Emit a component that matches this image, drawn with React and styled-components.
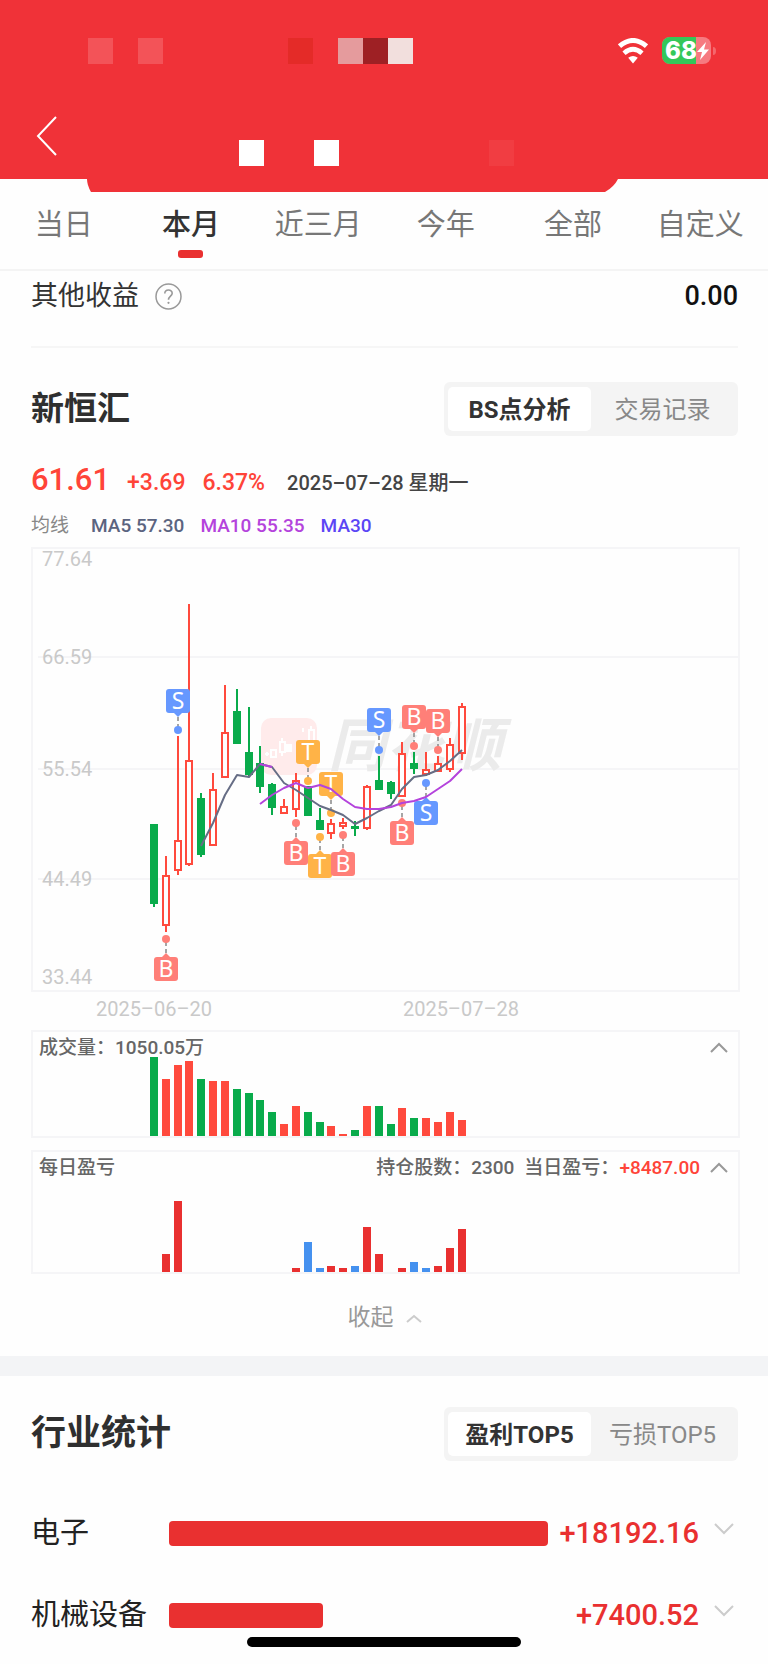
import React, { useState } from "react"
import styled, { createGlobalStyle } from "styled-components"

const GlobalStyle = createGlobalStyle`
  * {
    box-sizing: border-box;
  }

  body {
    margin: 0;
    background: #fefefe;
    color: #333;
    font-family: Roboto, "Noto Sans CJK SC", sans-serif;
  }

  button {
    font-family: inherit;
    border: none;
    padding: 0;
    background: none;
    cursor: pointer;
  }

  svg {
    display: block;
  }
`

const HeaderStyled = styled.header`
  position: relative;
  padding: 37px 0 13px;
  background: #f03238;
`
const StatusBarStyled = styled.div`
  display: flex;
  align-items: center;
  justify-content: space-between;
  height: 28px;
  padding: 0 51px 0 88px;
`
const StatusIconsStyled = styled.div`
  display: flex;
  align-items: center;
  gap: 14px;
`
const TilesStyled = styled.div`
  display: flex;
`
const TileStyled = styled.span`
  width: 25px;
  height: 26px;
  background: ${({ $color }) => $color || "transparent"};
`
const TitleBarStyled = styled.div`
  display: flex;
  align-items: flex-end;
  gap: 181px;
  height: 51px;
  margin-top: 50px;
  padding-left: 36px;
`
const BackButtonStyled = styled.button`
  align-self: flex-start;
`
const HeaderLipStyled = styled.svg`
  position: absolute;
  top: 100%;
  left: 87px;
`

const TabsStyled = styled.nav`
  display: grid;
  grid-template-columns: repeat(6, 1fr);
  padding: 26px 4px 11px 0;
  border-bottom: 2px solid #f4f4f4;
`
const TabStyled = styled.button`
  display: flex;
  flex-direction: column;
  align-items: center;
  gap: 5px;
  font-size: 29px;
  line-height: 40px;
  font-weight: ${({ $active }) => ($active ? 500 : 400)};
  color: ${({ $active }) => ($active ? "#333" : "#777")};

  &:after {
    content: "";
    width: 25px;
    height: 8px;
    border-radius: 3px;
    background: ${({ $active }) => ($active ? "#e93030" : "transparent")};
  }
`

const SectionStyled = styled.section`
  padding: 0 30px 0 31px;
`
const OtherRowStyled = styled.div`
  display: flex;
  align-items: center;
  padding: 5px 0 30px;
  border-bottom: 2px solid #f6f6f6;
  font-size: 27px;
  line-height: 40px;
`
const HelpButtonStyled = styled.button`
  margin-left: 16px;
`
const OtherValueStyled = styled.span`
  margin-left: auto;
  font-weight: 500;
  color: #111;
`

const SectionHeadStyled = styled.div`
  display: flex;
  align-items: center;
  justify-content: space-between;
  padding-top: ${({ $top }) => $top}px;
`
const TitleStyled = styled.h2`
  margin: 0;
  font-size: 35px;
  line-height: 48px;
  font-weight: 700;
  color: #2f2f2f;
`
const StockNameStyled = styled(TitleStyled)`
  font-size: 33px;
`
const SegmentStyled = styled.div`
  display: grid;
  grid-template-columns: 143px 143px;
  padding: 5px 4px;
  border-radius: 6px;
  background: #f4f4f4;
`
const SegmentButtonStyled = styled.button`
  height: 44px;
  padding-bottom: 4px;
  border-radius: 5px;
  font-size: 24px;
  font-weight: ${({ $active }) => ($active ? 700 : 400)};
  color: ${({ $active }) => ($active ? "#333" : "#888")};
  background: ${({ $active }) => ($active ? "#fff" : "transparent")};
`

const QuoteStyled = styled.div`
  display: flex;
  align-items: baseline;
  margin-top: 24px;
  line-height: 40px;
  font-size: 23px;
  font-weight: 500;
  gap: 17px;
  color: #ff4438;
`
const PriceStyled = styled.strong`
  font-size: 31px;
  font-weight: 500;
`
const DateStyled = styled.span`
  padding-left: 5px;
  font-size: 20px;
  color: #444;
`
const LegendStyled = styled.div`
  display: flex;
  gap: 16px;
  margin: 9px 0 7px;
  font-size: 19px;
  line-height: 28px;
`
const LegendItemStyled = styled.span`
  color: ${({ $color }) => $color};
  font-weight: ${({ $light }) => ($light ? 400 : 500)};
  padding-right: ${({ $light }) => ($light ? 6 : 0)}px;
`

const ChartsStyled = styled.div`
  margin-right: -2px;
`
const ChartSvgStyled = styled.svg`
  width: 100%;
  height: auto;
  font-family: Roboto, "Noto Sans CJK SC", sans-serif;
`
const PanelStyled = styled.div`
  margin-top: 8px;
  border: 2px solid #f5f5f7;

  & + & {
    margin-top: 12px;
  }
`
const PanelHeadStyled = styled.div`
  display: flex;
  align-items: center;
  gap: 10px;
  padding: 6px 10px ${({ $bottom }) => $bottom || 0}px 6px;
  font-size: 19px;
  line-height: 19px;
  font-weight: 500;
  color: #666;
`
const PanelTitleStyled = styled.span`
  margin-right: auto;
`
const GainStyled = styled.span`
  color: #ff4438;
`

const CollapseButtonStyled = styled.button`
  display: flex;
  align-items: center;
  gap: 12px;
  margin: 24px auto 18px;
  font-size: 23px;
  line-height: 40px;
  color: #999;
`
const BandStyled = styled.div`
  height: 20px;
  background: #f3f4f6;
`

const IndustryListStyled = styled.ul`
  display: flex;
  flex-direction: column;
  gap: 42px;
  margin: 52px 0 0;
  padding: 0 0 20px;
  list-style: none;
`
const IndustryRowStyled = styled.li`
  display: grid;
  grid-template-columns: 132px 1fr 145px 33px;
  align-items: center;
  column-gap: 6px;
  height: 40px;
  line-height: 40px;
`
const IndustryNameStyled = styled.span`
  font-size: 29px;
  color: #222;
  white-space: nowrap;
`
const BarStyled = styled.div`
  height: 25px;
  border-radius: 4px;
  background: #e93030;
`
const AmountStyled = styled.span`
  font-size: 29px;
  font-weight: 500;
  text-align: right;
  white-space: nowrap;
  color: #e93030;
`
const ExpandButtonStyled = styled.button`
  justify-self: end;
  padding: 0 4px 8px 0;
`
const HomeBarStyled = styled.div`
  position: fixed;
  left: 50%;
  bottom: 17px;
  width: 274px;
  height: 10px;
  margin-left: -137px;
  border-radius: 5px;
  background: #000;
`

const STATUS_TILES = [
  "#f35358", null, "#f35358", null, null, null, null, null,
  "#e42b28", null, "#e59b9d", "#9e2024", "#f2dfdd",
]
const TITLE_TILES = [
  "#fff", null, null, "#fff", null, null, null, null, null, null, "#f13d42",
]

const TABS = ["当日", "本月", "近三月", "今年", "全部", "自定义"]

const RED = "#ff4a3d"
const GREEN = "#09ab4b"

// x centre of the n-th trading day
const dayX = i => Math.round(154 + i * 11.83)

// [direction, body top, body bottom, high, low]
const CANDLES = [
  ["g", 824, 904, 824, 907],
  ["r", 875, 926, 856, 932],
  ["r", 840, 871, 736, 875],
  ["r", 760, 865, 604, 866],
  ["g", 798, 855, 793, 857],
  ["r", 789, 846, 773, 846],
  ["r", 732, 778, 685, 778],
  ["g", 711, 744, 689, 744],
  ["g", 752, 775, 707, 776],
  ["g", 763, 787, 746, 793],
  ["g", 784, 808, 783, 815],
  ["r", 806, 814, 799, 814],
  ["r", 780, 810, 773, 817],
  ["g", 786, 816, 786, 816],
  ["g", 820, 830, 808, 830],
  ["r", 823, 834, 819, 839],
  ["r", 822, 827, 818, 829],
  ["g", 826, 829, 821, 836],
  ["r", 786, 829, 785, 830],
  ["g", 780, 790, 756, 790],
  ["g", 782, 794, 781, 799],
  ["r", 753, 797, 742, 797],
  ["g", 763, 769, 752, 774],
  ["r", 769, 775, 752, 776],
  ["r", 763, 772, 756, 772],
  ["r", 744, 770, 738, 772],
  ["r", 706, 754, 703, 760],
]

const MA5 = [
  846, 823, 795, 775, 777, 764, 767, 783, 790, 798, 806, 810, 815, 824, 818,
  811, 805, 789, 777, 775, 770, 761, 750,
]
const MA10 = [
  804, 795, 788, 783, 788, 785, 789, 799, 807, 809, 809, 807, 803, 801, 797,
  789, 781, 769,
]

// [day, kind, box top, dot y]
const MARKERS = [
  [1, "B", 957, 939],
  [2, "S", 689, 730],
  [12, "B", 841, 823],
  [13, "T", 740, 781],
  [14, "T", 854, 837],
  [15, "T", 772, 813],
  [16, "B", 852, 835],
  [19, "S", 708, 750],
  [21, "B", 821, 803],
  [22, "B", 705, 746],
  [23, "S", 801, 783],
  [24, "B", 709, 750],
]
const MARKER_COLORS = { B: "#ff7f78", S: "#6698ff", T: "#ffb347" }

const GRID = [
  [657, "66.59"],
  [769, "55.54"],
  [879, "44.49"],
]

const VOLUMES = [
  79, 57, 71, 75, 57, 55, 55, 47, 43, 36, 24, 12, 30, 24, 14, 10, 2, 6, 30, 30,
  12, 28, 18, 18, 14, 24, 16,
]
const PROFITS = [
  0, 18, 71, 0, 0, 0, 0, 0, 0, 0, 0, 0, 4, -30, -4, 6, 4, -6, 45, 18, 0, 4,
  -10, -4, 6, 24, 43,
]

const INDUSTRIES = [
  { name: "电子", value: 18192.16 },
  { name: "机械设备", value: 7400.52 },
]

const linePoints = (values, from) =>
  values.map((y, i) => `${dayX(from + i)},${y}`).join(" ")

const Tiles = ({ colors }) => (
  <TilesStyled>
    {colors.map((color, i) => (
      <TileStyled key={i} $color={color} />
    ))}
  </TilesStyled>
)

const WifiIcon = () => (
  <svg width="30" height="26" viewBox="0 0 30 26" fill="none">
    <path
      d="M1.5 8.2 Q15 -3.2 28.5 8.2"
      stroke="#fff"
      strokeWidth="5"
    />
    <path
      d="M6 15.2 Q15 7.4 24 15.2"
      stroke="#fff"
      strokeWidth="4.8"
    />
    <path d="M10.2 19.8 Q15 16 19.8 19.8 L15 25.5Z" fill="#fff" />
  </svg>
)

const BatteryIcon = () => (
  <svg width="55" height="28" viewBox="0 0 55 28">
    <clipPath id="battery">
      <rect width="49" height="27" rx="8" />
    </clipPath>
    <g clipPath="url(#battery)">
      <rect width="49" height="27" fill="#f67a80" />
      <rect width="34" height="27" fill="#34c759" />
    </g>
    <path d="M51 10 Q54 10 54 14 Q54 18 51 18Z" fill="#f4686d" />
    <text
      x="3"
      y="22"
      fill="#fff"
      fontFamily="Inter, sans-serif"
      fontSize="24"
      fontWeight="800"
    >
      68
    </text>
    <path d="M44 5 L35 15 H40 L38 23 L47 12.500 H42Z" fill="#fff" />
  </svg>
)

const HelpIcon = () => (
  <svg width="27" height="27" viewBox="0 0 27 27" fill="none">
    <circle cx="13.500" cy="13.500" r="12.500" stroke="#999" strokeWidth="1.500" />
    <path
      d="M9.800 10.600 C9.800 5.800 17.200 5.800 17.200 10.300 C17.200 13 13.500 13.500 13.500 16.800"
      stroke="#999"
      strokeWidth="1.600"
    />
    <circle cx="13.500" cy="19.800" r="1.100" fill="#999" />
  </svg>
)

const Chevron = ({ width, height, color, down }) => (
  <svg width={width} height={height} fill="none">
    <path
      d={
        down
          ? `M1 1 L${width / 2} ${height - 2} L${width - 1} 1`
          : `M1 ${height - 1} L${width / 2} 2 L${width - 1} ${height - 1}`
      }
      stroke={color}
      strokeWidth="2"
    />
  </svg>
)

const Candle = ({ x, candle }) => {
  const [dir, top, bottom, high, low] = candle
  const color = dir === "r" ? RED : GREEN
  return (
    <g stroke={color} strokeWidth="2">
      <path d={`M${x} ${high}V${top}M${x} ${bottom}V${low}`} />
      <rect
        x={x - 3}
        y={top + 1}
        width="6"
        height={Math.max(bottom - top - 2, 1)}
        fill={dir === "r" ? "#fefefe" : color}
      />
    </g>
  )
}

const Marker = ({ x, kind, top, dot }) => {
  const color = MARKER_COLORS[kind]
  const above = top < dot
  const edge = above ? top + 24 : top
  const tip = above ? edge + 4 : edge - 4
  return (
    <g fill={color}>
      <path
        d={`M${x} ${tip}V${dot}`}
        stroke="#888"
        strokeWidth="1.500"
        strokeDasharray="4 3"
      />
      <circle cx={x} cy={dot} r="4" />
      <rect x={x - 12} y={top} width="24" height="24" rx="3" />
      <path d={`M${x - 4} ${edge}H${x + 4}L${x} ${tip}Z`} />
      <text
        x={x}
        y={top + 20}
        fill="#fff"
        fontSize="23"
        fontFamily="Noto Sans, sans-serif"
        textAnchor="middle"
      >
        {kind}
      </text>
    </g>
  )
}

const PriceChart = () => (
  <ChartSvgStyled viewBox="31 547 709 475" role="img" aria-label="K线">
    <g stroke="#f5f5f7" strokeWidth="2" fill="none">
      <rect x="32" y="548" width="707" height="443" />
      {GRID.map(([y]) => (
        <path key={y} d={`M38 ${y}H738`} />
      ))}
    </g>

    <rect x="261" y="718" width="56" height="57" rx="10" fill="#ffebeb" />
    <g stroke="#fff" strokeWidth="2" fill="none">
      <path d="M265 754h4m-2 -2v4M282 738v4m0 10v4M303 728v4M311 726v4m0 14v4" />
      <rect x="271" y="750" width="5" height="7" />
      <rect x="280" y="742" width="5" height="10" />
      <rect x="287" y="745" width="4" height="6" fill="#fff" />
      <rect x="309" y="730" width="5" height="13" />
    </g>
    <text
      x="328"
      y="766"
      fontSize="58"
      fontWeight="700"
      fontStyle="italic"
      fill="#ebebeb"
    >
      同花顺
    </text>

    <g fontSize="20" fill="#c9c9c9">
      <text x="42" y="566">77.64</text>
      {GRID.map(([y, label]) => (
        <text key={y} x="42" y={y + 7}>
          {label}
        </text>
      ))}
      <text x="42" y="984">33.44</text>
      <g textAnchor="middle">
        <text x="154" y="1016">2025–06–20</text>
        <text x="461" y="1016">2025–07–28</text>
      </g>
    </g>

    {CANDLES.map((candle, i) => (
      <Candle key={i} x={dayX(i)} candle={candle} />
    ))}
    {MARKERS.map(([day, kind, top, dot]) => (
      <Marker key={day} x={dayX(day)} kind={kind} top={top} dot={dot} />
    ))}
    <g fill="none" strokeWidth="2" strokeLinejoin="round">
      <polyline points={linePoints(MA5, 4)} stroke="#666d85" />
      <polyline points={linePoints([764, 767], 9)} stroke="#b443dc" />
      <polyline points={linePoints(MA10, 9)} stroke="#b443dc" />
    </g>
  </ChartSvgStyled>
)

const BarChart = ({ values, height, colorOf, label }) => (
  <ChartSvgStyled
    viewBox={`33 0 705 ${height}`}
    role="img"
    aria-label={label}
  >
    {values.map((value, i) => (
      <rect
        key={i}
        x={dayX(i) - 4}
        y={height - Math.abs(value)}
        width="8"
        height={Math.abs(value)}
        fill={colorOf(value, i)}
      />
    ))}
  </ChartSvgStyled>
)

const Segment = ({ options }) => {
  const [active, setActive] = useState(0)
  return (
    <SegmentStyled>
      {options.map((option, i) => (
        <SegmentButtonStyled
          key={option}
          type="button"
          $active={i === active}
          onClick={() => setActive(i)}
        >
          {option}
        </SegmentButtonStyled>
      ))}
    </SegmentStyled>
  )
}

const App = () => {
  const [tab, setTab] = useState("本月")
  const max = INDUSTRIES[0].value

  return (
    <>
      <GlobalStyle />
      <HeaderStyled>
        <StatusBarStyled>
          <Tiles colors={STATUS_TILES} />
          <StatusIconsStyled>
            <WifiIcon />
            <BatteryIcon />
          </StatusIconsStyled>
        </StatusBarStyled>
        <TitleBarStyled>
          <BackButtonStyled type="button" aria-label="返回">
            <svg width="22" height="42" fill="none">
              <path d="M20 2 L2 21 L20 40" stroke="#fff" strokeWidth="2" />
            </svg>
          </BackButtonStyled>
          <Tiles colors={TITLE_TILES} />
        </TitleBarStyled>
        <HeaderLipStyled width="532" height="13">
          <path d="M0 0 Q0 6 4 13 H518 Q527 8 531 0Z" fill="#f03238" />
        </HeaderLipStyled>
      </HeaderStyled>

      <TabsStyled>
        {TABS.map(name => (
          <TabStyled
            key={name}
            type="button"
            $active={name === tab}
            onClick={() => setTab(name)}
          >
            {name}
          </TabStyled>
        ))}
      </TabsStyled>

      <SectionStyled>
        <OtherRowStyled>
          其他收益
          <HelpButtonStyled type="button" aria-label="说明">
            <HelpIcon />
          </HelpButtonStyled>
          <OtherValueStyled>0.00</OtherValueStyled>
        </OtherRowStyled>

        <SectionHeadStyled $top={34}>
          <StockNameStyled>新恒汇</StockNameStyled>
          <Segment options={["BS点分析", "交易记录"]} />
        </SectionHeadStyled>
        <QuoteStyled>
          <PriceStyled>61.61</PriceStyled>
          <span>+3.69</span>
          <span>6.37%</span>
          <DateStyled>2025–07–28 星期一</DateStyled>
        </QuoteStyled>
        <LegendStyled>
          <LegendItemStyled $color="#888" $light>
            均线
          </LegendItemStyled>
          <LegendItemStyled $color="#5b6480">MA5 57.30</LegendItemStyled>
          <LegendItemStyled $color="#b443dc">MA10 55.35</LegendItemStyled>
          <LegendItemStyled $color="#5b45f5">MA30</LegendItemStyled>
        </LegendStyled>

        <ChartsStyled>
          <PriceChart />
          <PanelStyled>
            <PanelHeadStyled>
              <PanelTitleStyled>成交量：1050.05万</PanelTitleStyled>
              <button type="button" aria-label="收起成交量">
                <Chevron width={18} height={11} color="#999" />
              </button>
            </PanelHeadStyled>
            <BarChart
              label="成交量"
              values={VOLUMES}
              height={79}
              colorOf={(_, i) => (CANDLES[i][0] === "r" ? RED : GREEN)}
            />
          </PanelStyled>
          <PanelStyled>
            <PanelHeadStyled $bottom={24}>
              <PanelTitleStyled>每日盈亏</PanelTitleStyled>
              <span>持仓股数：2300</span>
              <span>
                当日盈亏：<GainStyled>+8487.00</GainStyled>
              </span>
              <button type="button" aria-label="收起每日盈亏">
                <Chevron width={18} height={11} color="#999" />
              </button>
            </PanelHeadStyled>
            <BarChart
              label="每日盈亏"
              values={PROFITS}
              height={71}
              colorOf={value => (value < 0 ? "#4591ef" : "#e93030")}
            />
          </PanelStyled>
        </ChartsStyled>

        <CollapseButtonStyled type="button">
          收起
          <Chevron width={16} height={9} color="#ccc" />
        </CollapseButtonStyled>
      </SectionStyled>

      <BandStyled />

      <SectionStyled>
        <SectionHeadStyled $top={31}>
          <TitleStyled>行业统计</TitleStyled>
          <Segment options={["盈利TOP5", "亏损TOP5"]} />
        </SectionHeadStyled>
        <IndustryListStyled>
          {INDUSTRIES.map(({ name, value }) => (
            <IndustryRowStyled key={name}>
              <IndustryNameStyled>{name}</IndustryNameStyled>
              <BarStyled style={{ width: `${(value / max) * 100}%` }} />
              <AmountStyled>+{value}</AmountStyled>
              <ExpandButtonStyled type="button" aria-label={`展开${name}`}>
                <Chevron width={20} height={12} color="#ccc" down />
              </ExpandButtonStyled>
            </IndustryRowStyled>
          ))}
        </IndustryListStyled>
      </SectionStyled>
      <HomeBarStyled />
    </>
  )
}

export default App
